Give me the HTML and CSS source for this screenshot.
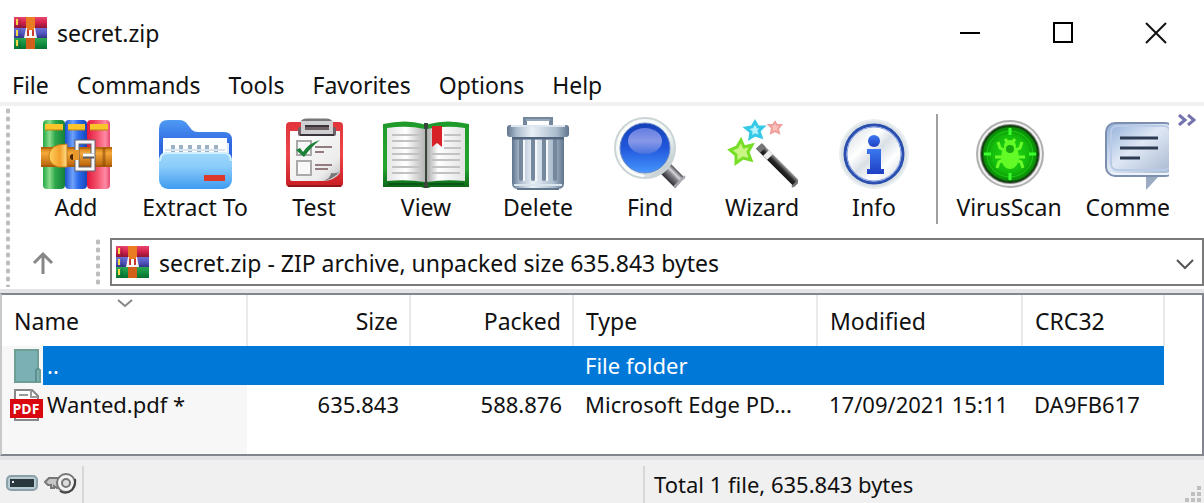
FILE: index.html
```html
<!DOCTYPE html>
<html lang="en">
<head>
<meta charset="utf-8">
<title>secret.zip</title>
<link rel="stylesheet" href="styles.css">
</head>
<body>
<svg class="defs" aria-hidden="true">
  <defs>
    <linearGradient id="gGreen"><stop offset="0" stop-color="#23a845"/><stop offset=".3" stop-color="#8bdc8c"/><stop offset=".55" stop-color="#2fa84c"/><stop offset="1" stop-color="#14803a"/></linearGradient>
    <linearGradient id="gBlue"><stop offset="0" stop-color="#1a50cf"/><stop offset=".35" stop-color="#6fa2fa"/><stop offset=".6" stop-color="#2d6cec"/><stop offset="1" stop-color="#1546bb"/></linearGradient>
    <linearGradient id="gRed"><stop offset="0" stop-color="#e2173c"/><stop offset=".45" stop-color="#f4536c"/><stop offset=".8" stop-color="#ff8aa6"/><stop offset="1" stop-color="#e5486c"/></linearGradient>
    <linearGradient id="gBelt" x2="0" y2="1"><stop offset="0" stop-color="#c8730c"/><stop offset=".3" stop-color="#f5a83a"/><stop offset="1" stop-color="#b55f06"/></linearGradient>
    <linearGradient id="gFlap"><stop offset="0" stop-color="#ffd25e"/><stop offset=".6" stop-color="#f2a02c"/><stop offset="1" stop-color="#ffe08a"/></linearGradient>
    <linearGradient id="gFolderBack" x2="0" y2="1"><stop offset="0" stop-color="#4f9bf4"/><stop offset=".5" stop-color="#2f66e0"/><stop offset="1" stop-color="#2f66e0"/></linearGradient>
    <linearGradient id="gFolder" x2="0" y2="1"><stop offset="0" stop-color="#9ed8fb"/><stop offset=".4" stop-color="#8accfa"/><stop offset="1" stop-color="#3f9bf0"/></linearGradient>
    <linearGradient id="gBoard" x2="0" y2="1"><stop offset="0" stop-color="#e0353a"/><stop offset=".5" stop-color="#f0444a"/><stop offset="1" stop-color="#c91d24"/></linearGradient>
    <linearGradient id="gPaper" x2="1" y2="1"><stop offset="0" stop-color="#fff"/><stop offset=".75" stop-color="#ececec"/><stop offset="1" stop-color="#bbb"/></linearGradient>
    <linearGradient id="gPageL"><stop offset="0" stop-color="#e4e4e4"/><stop offset=".5" stop-color="#fff"/><stop offset="1" stop-color="#b5b5b5"/></linearGradient>
    <linearGradient id="gPageR"><stop offset="0" stop-color="#a8a8a8"/><stop offset=".3" stop-color="#fff"/><stop offset="1" stop-color="#e2e2e2"/></linearGradient>
    <linearGradient id="gCover" x2="0" y2="1"><stop offset="0" stop-color="#1e9a2a"/><stop offset=".7" stop-color="#23a52f"/><stop offset="1" stop-color="#0b6417"/></linearGradient>
    <linearGradient id="gBin"><stop offset="0" stop-color="#5f748c"/><stop offset=".15" stop-color="#a9bacb"/><stop offset=".4" stop-color="#e9f0f7"/><stop offset=".8" stop-color="#aabccd"/><stop offset="1" stop-color="#5f748c"/></linearGradient>
    <linearGradient id="gGlass" x2="0" y2="1"><stop offset="0" stop-color="#1440b8"/><stop offset=".5" stop-color="#2257dc"/><stop offset="1" stop-color="#4596ff"/></linearGradient>
    <linearGradient id="gShine" x2="0" y2="1"><stop offset="0" stop-color="#6d83e4"/><stop offset=".5" stop-color="#93a0ea"/><stop offset="1" stop-color="#4b74df"/></linearGradient>
    <linearGradient id="gRim" x2="1" y2="1"><stop offset="0" stop-color="#fff"/><stop offset=".6" stop-color="#eef4f4"/><stop offset="1" stop-color="#a8b5ba"/></linearGradient>
    <linearGradient id="gHandle" gradientUnits="userSpaceOnUse" x1="54" y1="64" x2="64" y2="54"><stop offset="0" stop-color="#2d2d33"/><stop offset=".5" stop-color="#85858c"/><stop offset=".7" stop-color="#d5d5da"/><stop offset="1" stop-color="#4a4a50"/></linearGradient>
    <linearGradient id="gWand" gradientUnits="userSpaceOnUse" x1="49" y1="51" x2="55" y2="45"><stop offset="0" stop-color="#111"/><stop offset=".5" stop-color="#2c2c2c"/><stop offset="1" stop-color="#a9a9a9"/></linearGradient>
    <linearGradient id="gDisc" x2="1" y2="1"><stop offset="0" stop-color="#cfd8de"/><stop offset=".35" stop-color="#fff"/><stop offset=".5" stop-color="#d9e0e6"/><stop offset=".7" stop-color="#fff"/><stop offset="1" stop-color="#c7d0d8"/></linearGradient>
    <linearGradient id="gInk" x2="0" y2="1"><stop offset="0" stop-color="#3b78ef"/><stop offset="1" stop-color="#1f3fc4"/></linearGradient>
    <radialGradient id="gRadar"><stop offset="0" stop-color="#22d916"/><stop offset=".65" stop-color="#14bd0b"/><stop offset="1" stop-color="#0a8208"/></radialGradient>
    <linearGradient id="gBubble" x2="1" y2="1"><stop offset="0" stop-color="#8fadd8"/><stop offset=".45" stop-color="#dfe8f5"/><stop offset="1" stop-color="#a3b3cc"/></linearGradient>
    <linearGradient id="rRed" x2="0" y2="1"><stop offset="0" stop-color="#e8476f"/><stop offset=".5" stop-color="#d3224c"/><stop offset="1" stop-color="#8f1536"/></linearGradient>
    <linearGradient id="rBlue" x2="0" y2="1"><stop offset="0" stop-color="#6e70d4"/><stop offset=".5" stop-color="#5558c2"/><stop offset="1" stop-color="#303588"/></linearGradient>
    <linearGradient id="rGreen" x2="0" y2="1"><stop offset="0" stop-color="#2fa853"/><stop offset=".5" stop-color="#139041"/><stop offset="1" stop-color="#077030"/></linearGradient>
    <symbol id="archive" viewBox="0 0 33 32">
      <rect width="33" height="11" fill="url(#rRed)"/>
      <rect y="11" width="33" height="10" fill="url(#rBlue)"/>
      <rect y="21" width="33" height="11" fill="url(#rGreen)"/>
      <path d="M3 2v6M3 13v6M3 23v6" stroke="#f6d648" stroke-width="2"/>
      <path d="M6 1v9M6 12v8M6 22v9" stroke="#000" stroke-opacity=".2"/>
      <rect x="12" width="9" height="32" fill="#ea7d22"/>
      <rect x="12" y="21" width="9" height="11" fill="#d0601a"/>
      <path d="M12 11h9l2 10h-13z" fill="#f8f2f2"/>
      <path d="M13 0h7v13h-7z" fill="#ea7d22"/>
      <path d="M14 19v-6M19 19v-6" stroke="#c93a2c" stroke-width="2"/>
      <path d="M15 14h3v6h-3z" fill="#fff"/>
    </symbol>
  </defs>
</svg>

<div class="window">
  <header class="titlebar">
    <svg class="app-icon" aria-hidden="true"><use href="#archive"/></svg>
    <h1 class="title">secret.zip</h1>
    <div class="controls">
      <button class="control" aria-label="Minimize"><svg width="22" height="22" viewBox="0 0 22 22"><path d="M1 11h20" stroke="#000" stroke-width="2"/></svg></button>
      <button class="control" aria-label="Maximize"><svg width="22" height="22" viewBox="0 0 22 22"><path d="M2 1h18v19h-18z" fill="none" stroke="#000" stroke-width="2"/></svg></button>
      <button class="control" aria-label="Close"><svg width="22" height="22" viewBox="0 0 22 22"><path d="M1 1l20 20M21 1l-20 20" stroke="#111" stroke-width="2"/></svg></button>
    </div>
  </header>

  <nav class="menubar" aria-label="Menu">
    <button class="menu">File</button>
    <button class="menu">Commands</button>
    <button class="menu">Tools</button>
    <button class="menu">Favorites</button>
    <button class="menu">Options</button>
    <button class="menu">Help</button>
  </nav>

  <div class="bars">
    <div class="grip"></div>
    <div class="bar-rows">
      <div class="toolbar">
        <div class="tools">
          <button class="tool">
            <svg width="72" height="74" viewBox="0 0 72 74" aria-hidden="true">
              <rect x="3" y="3" width="22" height="69" rx="4" fill="url(#gGreen)"/>
              <rect x="25" y="3" width="22" height="69" rx="4" fill="url(#gBlue)"/>
              <rect x="47" y="3" width="23" height="69" rx="4" fill="url(#gRed)"/>
              <path d="M5 7h18v6h-18zM28 7h17v6h-17zM50 7h18v6h-18z" fill="#fac42b"/>
              <path d="M5 13h18M28 13h17M50 13h18" stroke="#b98212"/>
              <rect x="1" y="30" width="71" height="20" fill="url(#gBelt)"/>
              <path d="M1 31h71M1 49h71" stroke="#9a5206"/>
              <path d="M27 27v23h-9q-9-3-9-11t9-11z" fill="url(#gFlap)" stroke="#c57a16"/>
              <circle cx="33" cy="40" r="3" fill="#4c2504"/>
              <path d="M37 25h16v27h-16z" fill="none" stroke="#63636a" stroke-width="5"/>
              <path d="M37 25h16v27h-16z" fill="none" stroke="#f7f7fa" stroke-width="3"/>
              <path d="M36 33v10" stroke="#e9982b" stroke-width="6"/>
              <path d="M43 39h11" stroke="#59595f" stroke-width="5"/>
              <path d="M43 38h11" stroke="#fff" stroke-width="3"/>
              <path d="M64 31v18" stroke="#7f4206" stroke-opacity=".5" stroke-width="3"/>
            </svg>
            <span class="caption">Add</span>
          </button>
          <button class="tool tool-mid">
            <svg width="76" height="74" viewBox="0 0 76 74" aria-hidden="true">
              <path d="M2 12q0-9 9-9h11q6 0 9 5l4 5q2 2 6 2h26q8 0 8 8v30h-73z" fill="url(#gFolderBack)"/>
              <path d="M6 21h64v26h-64z" fill="#fff"/>
              <path d="M70 26h2v10h-2z" fill="#dfe9fa"/>
              <path d="M16 28v8M24 28v8M33 28v8M42 28v8M50 28v8M59 28v8" stroke="#9db1c4" stroke-width="4"/>
              <path d="M8 33h60" stroke="#d7e4f0" stroke-width="2"/>
              <rect x="2" y="35" width="73" height="37" rx="9" fill="url(#gFolder)"/>
              <path d="M9 36q-6 1-6 8M68 36q6 1 6 8M9 36h59" fill="none" stroke="#d2effd" stroke-width="2"/>
              <rect x="47" y="58" width="21" height="6" fill="#dd3829"/>
            </svg>
            <span class="caption">Extract To</span>
          </button>
          <button class="tool">
            <svg width="72" height="74" viewBox="0 0 72 74" aria-hidden="true">
              <rect x="8" y="5" width="57" height="65" rx="4" fill="url(#gBoard)"/>
              <path d="M10 69h53" stroke="#92161b" stroke-width="2"/>
              <path d="M12 14h50v42q-5 7-16 8h-32q-2 0-2-3z" fill="url(#gPaper)"/>
              <path d="M62 54q-6 8-17 10q8-3 8-8q6 1 9-2z" fill="#777"/>
              <path d="M24 6q0-3 5-3h19q5 0 5 3" fill="none" stroke="#77777b" stroke-width="3"/>
              <rect x="20" y="10" width="38" height="9" rx="2" fill="#6f6065"/>
              <path d="M25 6h28v9h-28z" fill="none" stroke="#cfcfd2" stroke-width="4"/>
              <path d="M27 9h24M22 18h34" stroke="#39353a" stroke-width="2"/>
              <path d="M19 24h14v14h-14zM19 44h14v14h-14z" fill="#f8f8f8" stroke="#aaa" stroke-width="2"/>
              <path d="M37 30h17M37 35h9M37 48h17M37 52h13" stroke="#927b7e" stroke-width="2"/>
              <path d="M18 33l4-2 3 4q6-9 17-12q-9 7-16 17z" fill="#198238"/>
            </svg>
            <span class="caption">Test</span>
          </button>
          <button class="tool">
            <svg width="88" height="74" viewBox="0 0 88 74" aria-hidden="true">
              <path d="M1 7q23-5 40 0q3 2 6 0q18-5 40 0v63h-38q-5 2-10 0h-38z" fill="url(#gCover)"/>
              <path d="M42 6h4v65h-4z" fill="#37453a"/>
              <path d="M5 11q20-3 38 1v53q-18-3-38-1z" fill="url(#gPageL)"/>
              <path d="M45 12q18-4 38-1v53q-20-2-38 1z" fill="url(#gPageR)"/>
              <path d="M10 18h28M10 24h28M10 31h28M10 37h28M10 43h28M10 50h28M10 56h28M50 37h28M50 43h28M50 50h28M50 56h28M62 18h17M62 24h17M62 31h17" stroke="#c2c2c2" stroke-width="2"/>
              <path d="M50 9h10v21l-5-4-5 4z" fill="#d72328"/>
              <path d="M6 67h35M47 67h35" stroke="#0b5615" stroke-width="2"/>
            </svg>
            <span class="caption">View</span>
          </button>
          <button class="tool">
            <svg width="72" height="74" viewBox="0 0 72 74" aria-hidden="true">
              <path d="M23 8v-6h26v6" fill="none" stroke="#75879a" stroke-width="4"/>
              <path d="M24 3h24" stroke="#b9c7d4"/>
              <path d="M10 20h52v46q0 6-6 6h-40q-6 0-6-6z" fill="url(#gBin)"/>
              <path d="M19 23v39M31 23v39M42 23v39M53 23v39" stroke="#76889d" stroke-width="4" stroke-linecap="round"/>
              <path d="M22 23v41M34 23v41M45 23v41" stroke="#f5f9fc" stroke-width="2"/>
              <path d="M12 68h48" stroke="#dbe5ee" stroke-width="2"/>
              <path d="M15 72h42" stroke="#62768b" stroke-width="2"/>
              <path d="M10 21h52" stroke="#51667e" stroke-width="3"/>
              <rect x="5" y="8" width="62" height="12" rx="3" fill="url(#gBin)"/>
              <path d="M9 9h54" stroke="#dde6ef" stroke-width="2"/>
            </svg>
            <span class="caption">Delete</span>
          </button>
          <button class="tool">
            <svg width="72" height="74" viewBox="0 0 72 74" aria-hidden="true">
              <path d="M50 50l16 16" stroke="url(#gHandle)" stroke-width="14"/>
              <path d="M60 70l11-11" stroke="#aaaab0" stroke-width="2"/>
              <circle cx="31" cy="31" r="30" fill="url(#gRim)" stroke="#ccd5d5" stroke-width="2"/>
              <circle cx="31" cy="31" r="25" fill="url(#gGlass)" stroke="#6c8bc5"/>
              <ellipse cx="31" cy="24" rx="17" ry="13" fill="url(#gShine)" opacity=".9"/>
              <path d="M7 45q8 13 23 14" fill="none" stroke="#fff" stroke-width="2"/>
            </svg>
            <span class="caption">Find</span>
          </button>
          <button class="tool">
            <svg width="72" height="74" viewBox="0 0 72 74" aria-hidden="true">
              <path d="M15 23l3 7 8-2-4 7 3 8-8-2-7 5v-8l-6-5 7-3z" fill="#c8f583" stroke="#77de27" stroke-width="3"/>
              <path d="M29 5l3 5 5 0-4 4 2 6-6-2-5 3 1-6-5-4 6-1z" fill="#b8f2fc" stroke="#35c8e7" stroke-width="3"/>
              <path d="M49 5l2 3h4l-3 4 1 4-4-2-4 2 1-5-3-3h4z" fill="#fbc0bb" stroke="#ef9f9c" stroke-width="2"/>
              <path d="M33 29l38 38" stroke="url(#gWand)" stroke-width="8"/>
              <path d="M33 29l4 4" stroke="#777" stroke-width="8"/>
              <path d="M40 36l4 4" stroke="#ededed" stroke-width="8"/>
              <path d="M66 70l7-7" stroke="#777" stroke-width="2"/>
            </svg>
            <span class="caption">Wizard</span>
          </button>
          <button class="tool">
            <svg width="72" height="74" viewBox="0 0 72 74" aria-hidden="true">
              <circle cx="36" cy="37" r="34" fill="#dbe2e6" stroke="#e9eef0" stroke-width="2"/>
              <circle cx="36" cy="37" r="29" fill="url(#gDisc)" stroke="#2b4fae" stroke-width="3"/>
              <circle cx="36" cy="37" r="27" fill="none" stroke="#7d9be3"/>
              <circle cx="36" cy="24" r="6" fill="url(#gInk)"/>
              <path d="M29 32h14v20h3v5h-17v-5h3v-15h-3z" fill="url(#gInk)"/>
            </svg>
            <span class="caption">Info</span>
          </button>
          <div class="divider"></div>
          <button class="tool tool-wide">
            <svg width="72" height="74" viewBox="0 0 72 74" aria-hidden="true">
              <circle cx="37" cy="37" r="33" fill="#f1f1f1" stroke="#b0b0b0" stroke-width="2"/>
              <circle cx="37" cy="37" r="30" fill="#888"/>
              <circle cx="37" cy="37" r="28" fill="url(#gRadar)" stroke="#14440f" stroke-width="2"/>
              <circle cx="37" cy="37" r="23" fill="none" stroke="#1fe01a" stroke-opacity=".7"/>
              <path d="M37 11v7M37 56v7M11 37h7M56 37h7" stroke="#3dff2f" stroke-width="3"/>
              <path d="M32 22l3 4M42 22l-3 4M25 25l2 6 6 3M49 25l-2 6-6 3M22 40h10M52 40h-10M24 51l2-6 5-2M50 51l-2-6-5-2" fill="none" stroke="#6bfb2b" stroke-width="3"/>
              <ellipse cx="37" cy="40" rx="9" ry="12" fill="#62fb25"/>
              <circle cx="37" cy="29" r="6" fill="#62fb25"/>
              <circle cx="37" cy="32" r="4" fill="#17a70e"/>
            </svg>
            <span class="caption">VirusScan</span>
          </button>
          <button class="tool tool-wide">
            <svg width="72" height="74" viewBox="0 0 72 74" aria-hidden="true">
              <path d="M43 58h14l-14 15z" fill="#9aabc2"/>
              <rect x="3" y="6" width="68" height="53" rx="9" fill="url(#gBubble)" stroke="#7c8fae" stroke-width="2"/>
              <rect x="8" y="9" width="59" height="44" rx="6" fill="none" stroke="#b9cbe6" stroke-width="2"/>
              <path d="M8 55q2 2 6 2h48q4 0 6-2" fill="none" stroke="#edf3fa" stroke-width="2"/>
              <path d="M17 21h38M17 31h38M17 41h20" stroke="#2c3a52" stroke-width="3"/>
            </svg>
            <span class="caption">Comment</span>
          </button>
        </div>
        <button class="more" aria-label="More tools"><svg width="18" height="12" viewBox="0 0 18 12"><path d="M1 1l6 5-6 5M10 1l6 5-6 5" fill="none" stroke="#7472ad" stroke-width="3"/></svg></button>
      </div>

      <div class="addressbar">
        <button class="up" aria-label="Up one level"><svg width="22" height="24" viewBox="0 0 22 24"><path d="M11 23v-20M2 12l9-9 9 9" fill="none" stroke="#868686" stroke-width="3"/></svg></button>
        <div class="grip"></div>
        <div class="address">
          <svg class="app-icon address-icon" aria-hidden="true"><use href="#archive"/></svg>
          <select class="address-select" aria-label="Address"><option>secret.zip - ZIP archive, unpacked size 635.843 bytes</option></select>
          <svg class="address-arrow" width="18" height="12" viewBox="0 0 18 12" aria-hidden="true"><path d="M1 2l8 8 8-8" fill="none" stroke="#555" stroke-width="2"/></svg>
        </div>
      </div>
    </div>
  </div>

  <main class="list">
    <table class="files">
      <colgroup><col class="c-name"><col class="c-num"><col class="c-num"><col class="c-type"><col class="c-date"><col class="c-crc"></colgroup>
      <thead>
        <tr>
          <th scope="col" aria-sort="ascending">Name<svg class="sort" width="16" height="9" viewBox="0 0 16 9" aria-hidden="true"><path d="M1 1l7 6 7-6" fill="none" stroke="#888" stroke-width="2"/></svg></th>
          <th class="num" scope="col">Size</th><th class="num" scope="col">Packed</th><th scope="col">Type</th><th scope="col">Modified</th><th scope="col">CRC32</th>
        </tr>
      </thead>
      <tbody>
        <tr class="selected">
          <td class="name"><div class="entry">
            <svg width="33" height="36" viewBox="0 0 33 36" aria-hidden="true"><path d="M5 2h23v19l2 1v12h-25z" fill="#7bb0b4" stroke="#6e9f95" stroke-width="2"/><path d="M26 34v-12l3-2" fill="none" stroke="#5e908e" stroke-width="2"/></svg>
            <span class="entry-name">..</span></div></td>
          <td></td><td></td><td>File folder</td><td></td><td></td>
        </tr>
        <tr>
          <td class="name"><div class="entry">
            <svg width="33" height="36" viewBox="0 0 33 36" aria-hidden="true"><path d="M5 3h17l6 6v24h-23z" fill="#fff" stroke="#888" stroke-width="2"/><path d="M21 3v7h7M9 8h9" fill="none" stroke="#999" stroke-width="2"/><rect y="12" width="33" height="19" fill="#d9070f"/><text x="16" y="27" class="pdf">PDF</text></svg>
            <span class="entry-name">Wanted.pdf *</span></div></td>
          <td class="num">635.843</td><td class="num">588.876</td><td>Microsoft Edge PD...</td><td>17/09/2021 15:11</td><td>DA9FB617</td>
        </tr>
        <tr class="rest"><td class="name"></td><td colspan="5"></td></tr>
      </tbody>
    </table>
  </main>

  <footer class="status">
    <div class="status-icons">
      <svg width="32" height="16" viewBox="0 0 32 16" aria-hidden="true"><rect x="1" y="1" width="30" height="14" rx="4" fill="#b7cbd2" stroke="#8ba0a8" stroke-width="2"/><path d="M4 4h24v8h-24z" fill="#2a373c"/><path d="M6 6h2v2h-2z" fill="#e6f2f5"/></svg>
      <svg width="34" height="22" viewBox="0 0 34 22" aria-hidden="true"><path d="M16 6h-11l-4 4 3 3h3v3h3v-2l3 2 3-2" fill="#c5c5c5" stroke="#777" stroke-width="2"/><circle cx="22" cy="11" r="9" fill="#f3f3f3" stroke="#777" stroke-width="2"/><path d="M16 19q6 4 12-1q4-5 3-11" fill="none" stroke="#444" stroke-width="2"/><circle cx="22" cy="11" r="4" fill="#ddd" stroke="#777" stroke-width="2"/></svg>
    </div>
    <div class="status-cell"></div>
    <div class="status-cell">Total 1 file, 635.843 bytes</div>
    <svg class="resize" width="18" height="18" viewBox="0 0 18 18" aria-hidden="true"><path d="M13 1h4v4h-4zM7 7h4v4h-4zM13 7h4v4h-4zM1 13h4v4h-4zM7 13h4v4h-4zM13 13h4v4h-4z" fill="#bfbfbf"/></svg>
  </footer>
</div>
</body>
</html>
```

FILE: styles.css
```css
* { box-sizing: border-box; }

body {
  margin: 0;
  background: #fff;
  color: #111;
  font: 23px/28px "Noto Sans", "Open Sans", sans-serif;
}

button, select {
  margin: 0;
  padding: 0;
  border: 0;
  background: none;
  color: inherit;
  font: inherit;
}

svg { display: block; flex: none; }

.defs { position: absolute; width: 0; height: 0; }

.window {
  display: flex;
  flex-direction: column;
  min-height: 100vh;
}

/* Title bar */
.titlebar {
  display: flex;
  align-items: center;
  gap: 10px;
  height: 66px;
  padding: 0 2px 0 14px;
}

.app-icon { width: 33px; height: 32px; }

.title {
  flex: 1;
  margin: 0;
  font-size: inherit;
  font-weight: 400;
}

.controls { display: flex; }

.control {
  display: grid;
  place-items: center;
  width: 93px;
  height: 64px;
}

/* Menu */
.menubar {
  display: flex;
  gap: 28px;
  height: 40px;
  padding-top: 1px;
  padding-left: 12px;
  border-bottom: 4px solid #f1f1f1;
}

.menu { white-space: nowrap; }

/* Toolbars */
.bars { display: flex; }

.grip {
  width: 4px;
  margin: 2px 0;
  background: radial-gradient(circle at 2px 3px, #bdbdbd 2px, transparent 3px) 0 0 / 4px 8px;
}

.bars > .grip { margin-left: 6px; }

.bar-rows { flex: 1; min-width: 0; }

.toolbar {
  display: flex;
  height: 131px;
  padding-left: 10px;
}

.tools {
  display: flex;
  flex: 1;
  min-width: 0;
  padding-top: 11px;
  overflow: hidden;
}

.tool {
  display: flex;
  flex: none;
  flex-direction: column;
  align-items: center;
  gap: 2px;
  width: 112px;
  height: 104px;
}

.tool-mid { width: 126px; }
.tool-wide { width: 130px; }

.divider {
  flex: none;
  width: 2px;
  height: 110px;
  margin: -3px 6px 0;
  background: #a0a0a0;
}

.more {
  display: flex;
  justify-content: center;
  width: 35px;
  padding-top: 8px;
}

.addressbar {
  display: flex;
  height: 52px;
}

.up {
  display: grid;
  place-items: center;
  width: 66px;
}

.addressbar > .grip { margin-left: 20px; }

.address {
  position: relative;
  flex: 1;
  margin: 1px 0 3px 10px;
}

.address-select {
  width: 100%;
  height: 48px;
  padding: 4px 40px 2px 47px;
  border: 2px solid #7a7a7a;
  line-height: 36px;
  appearance: none;
}

.address-icon { position: absolute; top: 8px; left: 6px; }
.address-arrow { position: absolute; top: 20px; right: 10px; }

/* File list */
.list {
  flex: 1;
  display: flex;
  margin-top: 4px;
  border: 2px solid #82868f;
  border-left-color: #c9c9cc;
  outline: 4px solid #e4e4e6;
}

.files {
  width: 1162px;
  table-layout: fixed;
  border-collapse: collapse;
}

.c-name { width: 245px; }
.c-num { width: 163px; }
.c-type { width: 244px; }
.c-date { width: 205px; }
.c-crc { width: 142px; }

.files th, .files td {
  overflow: hidden;
  padding: 0 12px;
  font-weight: 400;
  text-align: left;
  text-overflow: ellipsis;
  white-space: nowrap;
}

.files th {
  position: relative;
  height: 51px;
  border-right: 2px solid #e9e9e9;
}

.files .num { padding-right: 11px; text-align: right; }

.sort { position: absolute; top: 4px; left: 115px; }

.files td {
  height: 39px;
  padding-bottom: 2px;
  font-size: 22px;
}

.files .name { padding: 0; background: #f7f7f7; }

.selected td { background: #0078d7; color: #fff; }

.entry {
  display: flex;
  align-items: center;
  padding-left: 8px;
}

.entry-name {
  flex: 1;
  padding: 0 4px;
  line-height: 39px;
}

.selected .entry-name { background: #0078d7; }

.files .rest td { height: auto; }

.pdf {
  fill: #fff;
  font: 700 14px "Open Sans", sans-serif;
  text-anchor: middle;
}

/* Status bar */
.status {
  position: relative;
  display: flex;
  height: 47px;
  padding-top: 6px;
  border-top: 4px solid #e2e2e4;
  background: #f0f0f0;
  font-size: 22px;
}

.status-icons {
  display: flex;
  align-items: center;
  gap: 6px;
  width: 82px;
  padding: 0 0 4px 6px;
}

.status-cell {
  flex: 1;
  padding: 4px 9px;
  border-left: 2px solid #d7d7d7;
  white-space: nowrap;
}

.resize { position: absolute; right: 2px; bottom: 0; }
```
